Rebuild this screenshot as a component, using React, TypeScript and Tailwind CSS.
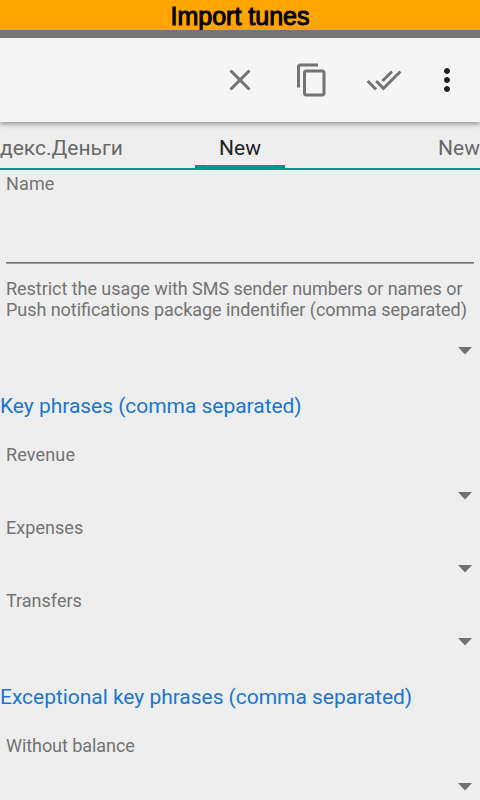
import React from "react";
import { MdClose, MdContentCopy, MdDoneAll, MdMoreVert } from "react-icons/md";

function DropdownField({
  label,
  height,
  tracking = "",
}: {
  label: string;
  height: string;
  tracking?: string;
}) {
  return (
    <div className={`flex shrink-0 flex-col px-1.5 ${height}`}>
      <label className={`text-[18px] leading-[21px] whitespace-pre-line text-[#737373] [font-feature-settings:'liga'_1] ${tracking}`}>
        {label}
      </label>
      <div className="mt-[27px] flex justify-end pr-0.5">
        <svg width="14" height="8" viewBox="0 0 14 8" className="block">
          <path d="M0 0h14L7 7.5z" fill="#707070" />
        </svg>
      </div>
    </div>
  );
}

function SectionTitle({ children }: { children: React.ReactNode }) {
  return (
    <h2 className="h-[51px] shrink-0 pt-px text-[21px] leading-[25px] tracking-[-0.035px] whitespace-nowrap text-[#1976d2]">
      {children}
    </h2>
  );
}

export default function App() {
  return (
    <div className="flex h-[800px] w-[480px] flex-col overflow-hidden bg-[#eeeeee] font-['Roboto','Noto_Sans',sans-serif]">
      <header className="flex h-[30px] shrink-0 justify-center bg-[#ffa500] font-['Liberation_Sans',sans-serif] text-[25px] leading-[32px] text-black [-webkit-text-stroke:1px_black]">
        Import tunes
      </header>
      <div className="z-20 h-2 shrink-0 bg-[#757575]" />

      <div className="z-10 flex h-[84px] shrink-0 items-center justify-end bg-[#f5f5f5] text-[36px] text-[#737373] shadow-[0_2px_5px_rgba(0,0,0,0.4)]">
        <button className="flex w-[72px] justify-center"><MdClose /></button>
        <button className="flex w-[72px] justify-center"><MdContentCopy /></button>
        <button className="flex w-[72px] justify-center"><MdDoneAll /></button>
        <button className="flex w-[60px] justify-center pr-1.5 text-[#212121]"><MdMoreVert /></button>
      </div>

      <nav className="flex h-12 shrink-0 items-stretch justify-between border-b-2 border-[#009688] text-[21px] leading-[25px] text-[#686868]">
        <span className="w-[195px] pt-[14px] whitespace-nowrap">декс.Деньги</span>
        <span className="-mb-0.5 w-[90px] border-b-[5px] border-[#009688] pt-[14px] text-center text-[#212121]">New</span>
        <span className="w-[195px] pt-[14px] text-right">New</span>
      </nav>

      <div className="flex h-[108px] shrink-0 flex-col px-1.5 pt-[3px]">
        <label className="text-[18px] leading-[21px] tracking-[0.15px] text-[#737373]">Name</label>
        <div className="h-[69px] shrink-0 border-b border-[#737373]" />
        <div className="h-px shrink-0 bg-[#9c9c9c]" />
      </div>

      <DropdownField
        height="h-[115px]"
        tracking="tracking-[-0.045px]"
        label={"Restrict the usage with SMS sender numbers or names or\nPush notifications package indentifier (comma separated)"}
      />
      <SectionTitle>Key phrases (comma separated)</SectionTitle>
      <DropdownField height="h-[73px]" tracking="tracking-[0.15px]" label="Revenue" />
      <DropdownField height="h-[73px]" tracking="tracking-[0.05px]" label="Expenses" />
      <DropdownField height="h-[94px]" label="Transfers" />
      <SectionTitle>Exceptional key phrases (comma separated)</SectionTitle>
      <DropdownField height="h-[65px]" tracking="tracking-[-0.06px]" label="Without balance" />
    </div>
  );
}
